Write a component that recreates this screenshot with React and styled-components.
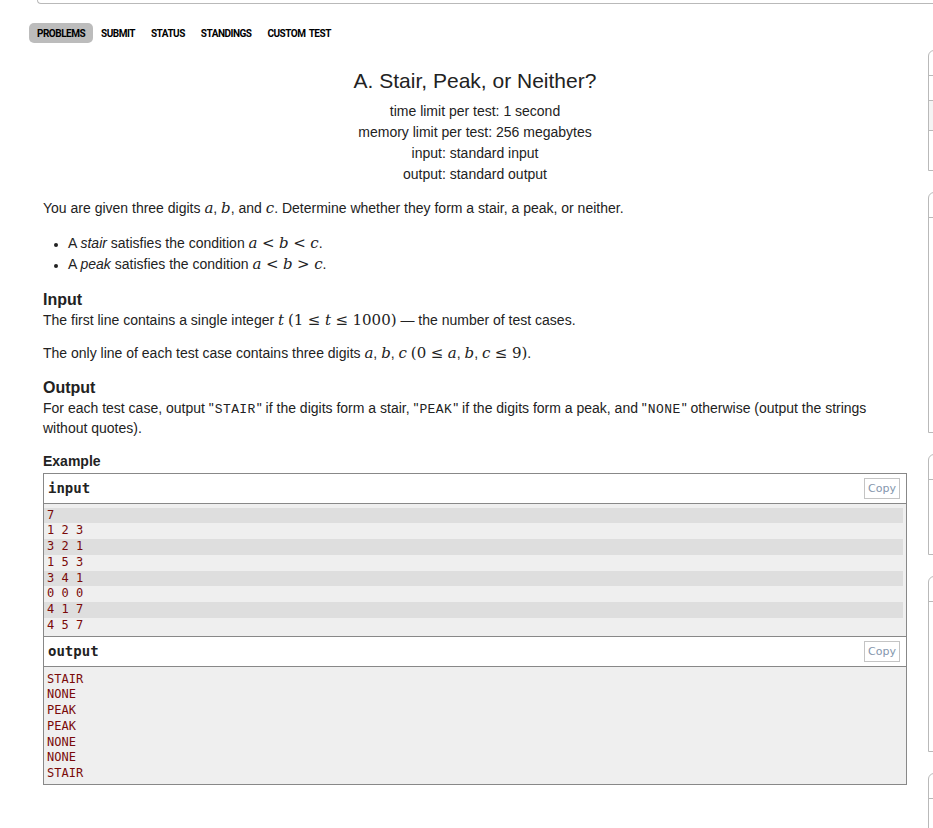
import React from 'react'
import styled, { createGlobalStyle } from 'styled-components'

const GlobalStyle = createGlobalStyle`
    html, body {
        margin: 0;
        padding: 0;
        background: #fff;
        overflow: hidden;
    }
    body {
        font-family: "Liberation Sans", Arial, sans-serif;
        color: #222;
    }
`

const navItems = ['PROBLEMS', 'SUBMIT', 'STATUS', 'STANDINGS', 'CUSTOM TEST']

const inputLines = ['7', '1 2 3', '3 2 1', '1 5 3', '3 4 1', '0 0 0', '4 1 7', '4 5 7']
const outputLines = ['STAIR', 'NONE', 'PEAK', 'PEAK', 'NONE', 'NONE', 'STAIR']

// sidebar boxes: body rows under the header (heights)
const sideBoxes = [
    { rows: [{ h: 25 }, { h: 30, shaded: true }, { h: 39 }] },
    { rows: [{ h: 214 }] },
    { rows: [{ h: 74 }] },
    { rows: [{ h: 149 }] },
    { rows: [{ h: 120 }] },
]

const App = () => {
    return (
        <Page>
            <GlobalStyle />
            <TopFrame />
            <Layout>
                <Main>
                    <Nav>
                        {navItems.map((item, i) => (
                            <NavItem key={item} active={i === 0}>
                                {item}
                            </NavItem>
                        ))}
                    </Nav>
                    <Statement>
                        <Header>
                            <Title>A. Stair, Peak, or Neither?</Title>
                            <HeaderLine>time limit per test: 1 second</HeaderLine>
                            <HeaderLine>memory limit per test: 256 megabytes</HeaderLine>
                            <HeaderLine>input: standard input</HeaderLine>
                            <HeaderLine>output: standard output</HeaderLine>
                        </Header>

                        <Para>
                            You are given three digits <V>a</V>, <V>b</V>, and <V>c</V>. Determine
                            whether they form a stair, a peak, or neither.
                        </Para>
                        <Bullets>
                            <li>
                                A <em>stair</em> satisfies the condition <V>a</V>
                                <Rel>&lt;</Rel>
                                <V>b</V>
                                <Rel>&lt;</Rel>
                                <V>c</V>.
                            </li>
                            <li>
                                A <em>peak</em> satisfies the condition <V>a</V>
                                <Rel>&lt;</Rel>
                                <V>b</V>
                                <Rel>&gt;</Rel>
                                <V>c</V>.
                            </li>
                        </Bullets>

                        <SectionTitle>Input</SectionTitle>
                        <Para>
                            The first line contains a single integer <V>t</V> <Num>(1</Num>
                            <Rel>≤</Rel>
                            <V>t</V>
                            <Rel>≤</Rel>
                            <Num>1000)</Num> — the number of test cases.
                        </Para>
                        <Para>
                            The only line of each test case contains three digits <V>a</V>,{' '}
                            <V>b</V>, <V>c</V> <Num>(0</Num>
                            <Rel>≤</Rel>
                            <V>a</V>, <V>b</V>, <V>c</V>
                            <Rel>≤</Rel>
                            <Num>9)</Num>.
                        </Para>

                        <SectionTitle>Output</SectionTitle>
                        <Para>
                            For each test case, output "<Code>STAIR</Code>" if the digits form a
                            stair, "<Code>PEAK</Code>" if the digits form a peak, and "
                            <Code>NONE</Code>" otherwise (output the strings without quotes).
                        </Para>

                        <ExampleTitle>Example</ExampleTitle>
                        <ExampleBox>
                            <BoxHead>
                                <span>input</span>
                                <CopyButton>Copy</CopyButton>
                            </BoxHead>
                            <Pre>
                                {inputLines.map((line, i) => (
                                    <Line key={i} odd={i % 2 === 0}>
                                        {line}
                                    </Line>
                                ))}
                            </Pre>
                            <BoxHead bordered>
                                <span>output</span>
                                <CopyButton>Copy</CopyButton>
                            </BoxHead>
                            <Pre output>
                                {outputLines.map((line, i) => (
                                    <Line key={i}>{line}</Line>
                                ))}
                            </Pre>
                        </ExampleBox>
                    </Statement>
                </Main>
                <Sidebar>
                    {sideBoxes.map((box, i) => (
                        <SideBox key={i}>
                            <SideHead />
                            {box.rows.map((row, j) => (
                                <SideRow
                                    key={j}
                                    shaded={row.shaded}
                                    last={j === box.rows.length - 1}
                                    style={{ height: row.h }}
                                />
                            ))}
                        </SideBox>
                    ))}
                </Sidebar>
            </Layout>
        </Page>
    )
}

const Page = styled.div`
    width: 933px;
    height: 828px;
    overflow: hidden;
    background: #fff;
`

const TopFrame = styled.div`
    height: 3px;
    margin-left: 37px;
    width: 1200px;
    border-left: 1px solid #b9b9b9;
    border-bottom: 1px solid #b9b9b9;
    border-bottom-left-radius: 6px;
`

const Layout = styled.div`
    display: flex;
    align-items: flex-start;
`

const Main = styled.div`
    flex: 0 0 928px;
    padding-left: 29px;
    box-sizing: border-box;
`

const Nav = styled.div`
    display: flex;
    margin-top: 19px;
`

const NavItem = styled.div`
    height: 20px;
    line-height: 21px;
    padding: 0 8px;
    border-radius: 5px;
    font-family: "Roboto", "Liberation Sans", sans-serif;
    font-weight: bold;
    font-size: 10px;
    letter-spacing: -0.5px;
    word-spacing: 1.5px;
    color: #000;
    background: ${p => (p.active ? '#bcbcbc' : 'transparent')};
`

const Statement = styled.div`
    display: flex;
    flex-direction: column;
    margin-left: 14px;
    width: 864px;
    font-size: 14px;
`

const Header = styled.div`
    text-align: center;
    margin-top: 25px;
    margin-bottom: 13px;
`

const Title = styled.div`
    font-size: 21px;
    line-height: 25px;
    margin-bottom: 8px;
`

const HeaderLine = styled.div`
    font-size: 14px;
    line-height: 21px;
`

const Para = styled.p`
    margin: 0 0 13px;
    line-height: 20px;
`

const Bullets = styled.ul`
    margin: 1.5px 0 13px;
    padding-left: 25px;
    line-height: 21px;
    li::marker {
        font-size: 12px;
    }
`

const mathFont = `"DejaVu Serif", "Liberation Serif", serif`

const V = styled.span`
    font-family: ${mathFont};
    font-style: italic;
    font-size: 15px;
    line-height: 1;
`

const Num = styled.span`
    font-family: ${mathFont};
    font-size: 15px;
    line-height: 1;
`

const Rel = styled.span`
    font-family: ${mathFont};
    font-size: 15px;
    line-height: 1;
    margin: 0 4.5px;
`

const Code = styled.span`
    font-family: "Liberation Mono", "Courier New", monospace;
    font-size: 13px;
    letter-spacing: 0.4px;
    line-height: 1;
    margin: 0 1px;
`

const SectionTitle = styled.div`
    font-size: 16px;
    font-weight: bold;
    line-height: 20px;
    margin-top: 2px;
`

const ExampleTitle = styled.div`
    font-size: 14px;
    font-weight: bold;
    line-height: 20px;
    margin-bottom: 2px;
`

const ExampleBox = styled.div`
    border: 1px solid #888;
`

const BoxHead = styled.div`
    display: flex;
    align-items: center;
    justify-content: space-between;
    height: 29px;
    padding: 0 6px 0 4px;
    border-top: ${p => (p.bordered ? '1px solid #888' : 'none')};
    border-bottom: 1px solid #888;
    background: #fff;
    font-family: "DejaVu Sans Mono", "Liberation Mono", monospace;
    font-weight: bold;
    font-size: 14px;
    color: #222;
`

const CopyButton = styled.span`
    display: inline-block;
    font-family: "DejaVu Sans", "Liberation Sans", sans-serif;
    font-weight: normal;
    font-size: 11px;
    line-height: 19px;
    padding: 0 3px;
    border: 1px solid #c4c4c4;
    color: #8496ad;
`

const Pre = styled.div`
    background: #efefef;
    padding: ${p => (p.output ? '5px 3px 2px 0' : '4px 3px 2px 0')};
    font-family: "DejaVu Sans Mono", "Liberation Mono", monospace;
    font-size: 12px;
    color: #7a0a0a;
`

const Line = styled.div`
    height: 15.75px;
    line-height: 15.75px;
    padding-left: 3px;
    background: ${p => (p.odd ? '#dedede' : 'transparent')};
    white-space: pre;
`

const Sidebar = styled.div`
    flex: 0 0 300px;
    display: flex;
    flex-direction: column;
    gap: 21px;
    padding-top: 46px;
`

const SideBox = styled.div`
    border: 1px solid #b9b9b9;
    border-top-left-radius: 6px;
`

const SideHead = styled.div`
    height: 24px;
    border-bottom: 1px solid #b9b9b9;
`

const SideRow = styled.div`
    box-sizing: border-box;
    background: ${p => (p.shaded ? '#f4f4f4' : 'transparent')};
    border-bottom: ${p => (p.last ? 'none' : '1px solid #b9b9b9')};
`

export default App
